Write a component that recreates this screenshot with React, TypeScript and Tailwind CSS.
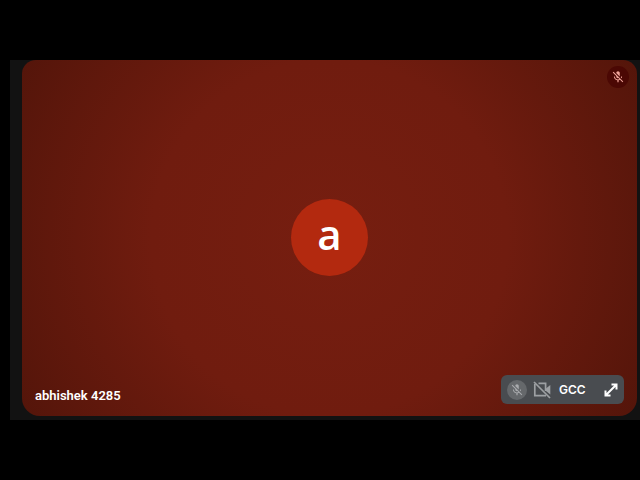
import React from "react";
import { MdMicOff } from "react-icons/md";

interface ParticipantProps {
  name: string;
}

const CameraOffIcon = () => (
  <svg className="h-[18px] w-[18px]" viewBox="0 0 18 18" fill="none" aria-hidden="true">
    <path d="M1 1L17 17" stroke="currentColor" strokeWidth="1.7" />
    <path
      d="M1.8 3V14.6H13M5.5 2.4H12.6V10"
      stroke="currentColor"
      strokeWidth="1.7"
    />
    <path d="M13 7.5L17.3 4V13.5L13 10Z" fill="currentColor" />
  </svg>
);

const ExpandIcon = () => (
  <svg className="h-3.5 w-3.5" viewBox="0 0 14 14" fill="none" aria-hidden="true">
    <path
      d="M7.5 1.5H12.5V6.5M6.5 12.5H1.5V7.5M2 12L12 2"
      stroke="currentColor"
      strokeWidth="2"
    />
  </svg>
);

const Avatar: React.FC<ParticipantProps> = ({ name }) => (
  <div className="flex size-[77px] items-center justify-center rounded-full bg-[#b3290f] font-['Open_Sans','Liberation_Sans',sans-serif] text-[42px] leading-none font-semibold text-white">
    <span className="pb-1.5">{name.charAt(0)}</span>
  </div>
);

const SelfPreview: React.FC<ParticipantProps> = ({ name }) => (
  <div className="flex h-[29px] w-[123px] items-center rounded-md bg-[#494c50] px-1.5">
    <span className="flex size-5 items-center justify-center rounded-full bg-[#65686b] text-[#a9abae]">
      <MdMicOff className="size-3.5" />
    </span>
    <span className="ml-1.5 text-[#9da0a3]">
      <CameraOffIcon />
    </span>
    <span className="ml-2 font-['Inter','Liberation_Sans',sans-serif] text-[12px] leading-4 font-semibold text-white">
      {name}
    </span>
    <button type="button" aria-label="Expand" className="ml-auto text-white">
      <ExpandIcon />
    </button>
  </div>
);

const ParticipantTile: React.FC<ParticipantProps> = ({ name }) => (
  <section className="grid flex-1 grid-rows-[1fr_auto_1fr] rounded-t-[14px] rounded-b-[18px] bg-[radial-gradient(circle_at_center,#761e10_0%,#701c0f_50%,#54150a_100%)] pb-0.5">
    <div className="flex items-start justify-end pt-1.5 pr-2">
      <span className="flex size-[22px] items-center justify-center rounded-full bg-[#4b0804] text-[#f2a59b]">
        <MdMicOff className="size-3.5" />
      </span>
    </div>
    <div className="flex justify-center">
      <Avatar name={name} />
    </div>
    <div className="flex items-end justify-between px-[13px] pb-2.5">
      <p className="text-[13px] leading-4 font-semibold text-white">{name}</p>
      <SelfPreview name="GCC" />
    </div>
  </section>
);

export default function App() {
  return (
    <main className="flex min-h-screen bg-black py-[60px] pl-2.5 font-['Roboto','Liberation_Sans',sans-serif]">
      <div className="flex flex-1 bg-[#121212] pr-[3px] pb-1 pl-3">
        <ParticipantTile name="abhishek 4285" />
      </div>
    </main>
  );
}
